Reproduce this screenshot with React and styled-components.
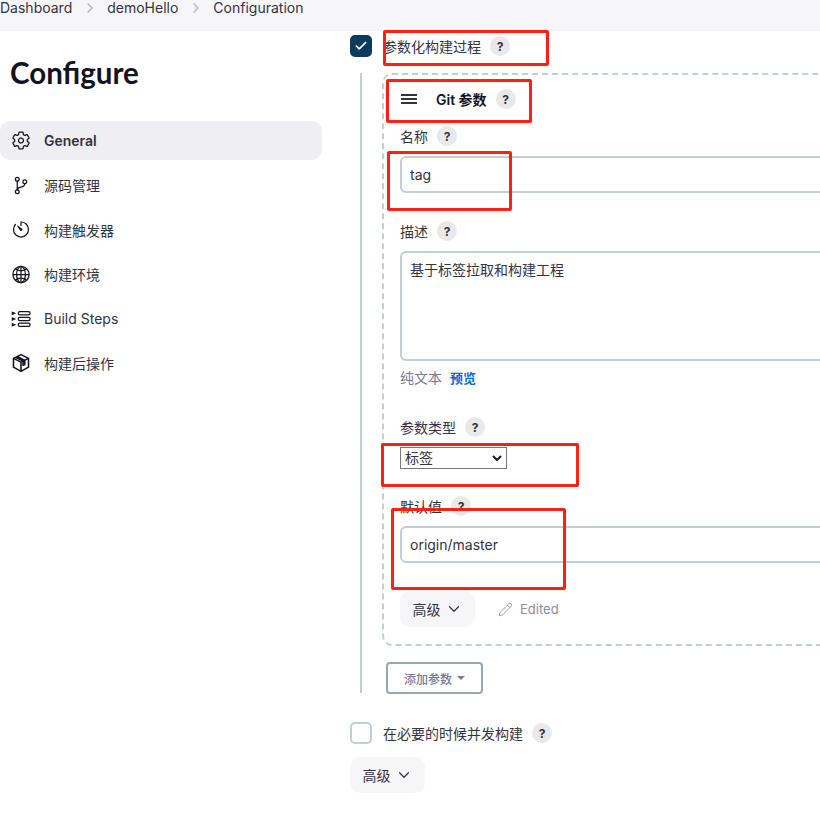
import React from "react";
import styled, { createGlobalStyle } from "styled-components";
import { Check, ChevronDown, Pencil } from "lucide-react";
import {
  IoSettingsOutline,
  IoGitBranchOutline,
  IoTimerOutline,
  IoGlobeOutline,
  IoChevronForwardOutline,
} from "react-icons/io5";

const GlobalStyle = createGlobalStyle`
  html, body {
    margin: 0;
    padding: 0;
    background: #fff;
    overflow: hidden;
    height: 817px;
  }
  body, select, button, textarea, input {
    font-family: Inter, "Noto Sans CJK SC", sans-serif;
  }
`;

const Page = styled.div`
  width: 820px;
  height: 817px;
  overflow: hidden;
  position: relative;
  color: #14141f;
`;

const Breadcrumb = styled.div`
  height: 31px;
  box-sizing: border-box;
  background: #f6f6f9;
  display: flex;
  align-items: flex-start;
  font-size: 14px;
  line-height: 16px;
  color: #33333f;
`;

const Crumb = styled.span`
  white-space: nowrap;
`;

const CrumbSep = styled.span`
  width: 35px;
  height: 16px;
  display: flex;
  align-items: center;
  justify-content: center;
  color: #b0b0b8;
`;

const Layout = styled.div`
  display: flex;
`;

const Sidebar = styled.aside`
  width: 322px;
  flex: none;
`;

const Title = styled.h1`
  margin: 24px 0 30px 10px;
  font-family: Lato, sans-serif;
  font-size: 29.5px;
  line-height: 36px;
  font-weight: 700;
`;

const NavItem = styled.div`
  height: 39px;
  margin-bottom: 5.5px;
  display: flex;
  align-items: center;
  gap: 13px;
  padding-left: 11px;
  border-radius: 10px;
  font-size: 14px;
  color: #33333f;
  background: ${(p) => (p.$active ? "#eeeef3" : "transparent")};
  font-weight: ${(p) => (p.$active ? 600 : 400)};
`;

const NavIcon = styled.span`
  width: 20px;
  height: 20px;
  display: flex;
  align-items: center;
  justify-content: center;
  color: #14141f;
`;

const Main = styled.main`
  margin-left: 28px;
  flex: 1;
  min-width: 0;
`;

const CheckRow = styled.div`
  display: flex;
  align-items: center;
  height: 22px;
  font-size: 14px;
  color: #33333f;
  margin-top: ${(p) => p.$top || 0}px;
`;

const CheckBox = styled.span`
  width: 22px;
  height: 22px;
  box-sizing: border-box;
  border-radius: 5px;
  margin-right: 11px;
  display: flex;
  align-items: center;
  justify-content: center;
  color: #fff;
  background: ${(p) => (p.$checked ? "#0b3c5d" : "#fff")};
  border: 2px solid ${(p) => (p.$checked ? "#0b3c5d" : "#c3ced3")};
`;

const Help = styled.span`
  width: 20px;
  height: 20px;
  flex: none;
  border-radius: 50%;
  background: #e9e9e9;
  color: #33333f;
  font-size: 12px;
  font-weight: 700;
  display: flex;
  align-items: center;
  justify-content: center;
  margin-left: 9px;
`;

const Nested = styled.div`
  margin: 16px 0 0 10px;
  padding-left: 20px;
  border-left: 2px solid #c3ced3;
  height: 620px;
`;

const Chunk = styled.div`
  width: 600px;
  height: 573px;
  box-sizing: border-box;
  border: 2px dashed #c3ced3;
  border-radius: 10px;
  padding: 0 0 0 16px;
`;

const ChunkHead = styled.div`
  display: flex;
  align-items: center;
  height: 22px;
  margin-top: 13px;
  font-size: 14px;
  font-weight: 600;
`;

const Handle = styled.span`
  width: 16px;
  height: 10px;
  margin: 0 19px 0 1px;
  border-top: 2px solid #33333f;
  border-bottom: 2px solid #33333f;
  box-sizing: border-box;
  position: relative;
  &::after {
    content: "";
    position: absolute;
    left: 0;
    right: 0;
    top: 2px;
    height: 2px;
    background: #33333f;
  }
`;

const FieldLabel = styled.div`
  display: flex;
  align-items: center;
  height: 20px;
  font-size: 14px;
  color: #33333f;
  margin-top: ${(p) => p.$top}px;
`;

const TextBox = styled.div`
  width: 500px;
  height: ${(p) => p.$height || 37}px;
  box-sizing: border-box;
  margin-top: ${(p) => p.$top || 10}px;
  border: 2px solid #c3ced3;
  border-radius: 6px;
  padding: ${(p) => (p.$height ? "6px 8px" : "0 8px")};
  display: flex;
  align-items: ${(p) => (p.$height ? "flex-start" : "center")};
  font-size: 14px;
  color: #33333f;
`;

const EditorTabs = styled.div`
  display: flex;
  gap: 8px;
  margin-top: 8px;
  font-size: 14px;
  line-height: 18px;
  color: #7a7a8c;
`;

const PreviewLink = styled.span`
  color: #0b6bcb;
  font-weight: 600;
  font-size: 13px;
`;

const chevron =
  "data:image/svg+xml,%3Csvg xmlns='http://www.w3.org/2000/svg' width='10' height='8' viewBox='0 0 10 8'%3E%3Cpath d='M1 2l4 4 4-4' fill='none' stroke='%23222' stroke-width='2.2'/%3E%3C/svg%3E";

const TypeSelect = styled.select`
  display: block;
  width: 107px;
  height: 22px;
  box-sizing: border-box;
  margin-top: 10px;
  font-size: 14px;
  line-height: 20px;
  padding: 0 0 0 4px;
  appearance: none;
  background: #fff url("${chevron}") no-repeat right 4px center;
  color: #33333f;
  border: 1px solid #767676;
  border-radius: 0;
`;

const AdvancedRow = styled.div`
  display: flex;
  align-items: center;
  margin-top: 28px;
`;

const AdvancedButton = styled.button`
  width: 75px;
  height: 36px;
  border: none;
  border-radius: 10px;
  background: #f6f6f9;
  color: #33333f;
  font-size: 14px;
  display: flex;
  align-items: center;
  justify-content: center;
  gap: 4px;
  padding: 0;
  margin-top: ${(p) => p.$top || 0}px;
`;

const Edited = styled.span`
  display: flex;
  align-items: center;
  gap: 7px;
  margin-left: 23px;
  font-size: 13px;
  color: #8a8a9c;
`;

const AddButton = styled.button`
  width: 97px;
  height: 32px;
  margin-top: 16px;
  box-sizing: border-box;
  background: #fff;
  border: 2px solid #9aa7b0;
  border-radius: 4px;
  color: #7a7a8c;
  font-size: 12px;
  font-weight: 500;
  display: flex;
  align-items: center;
  justify-content: center;
  gap: 5px;
  padding: 0;
  margin-left: 4px;
`;

const Caret = styled.span`
  width: 0;
  height: 0;
  border-left: 4px solid transparent;
  border-right: 4px solid transparent;
  border-top: 4px solid #7a7a8c;
`;

// the red boxes someone drew on top of the screenshot
const Mark = styled.div`
  position: absolute;
  box-sizing: border-box;
  border: 3px solid #ff1f14;
  border-radius: 2px;
  left: ${(p) => p.$x}px;
  top: ${(p) => p.$y}px;
  width: ${(p) => p.$w}px;
  height: ${(p) => p.$h}px;
`;

const StepsIcon = () => (
  <svg width="22" height="20" viewBox="0 0 22 20" fill="none" stroke="currentColor" strokeWidth="1.4">
    <rect x="8" y="2" width="13" height="3.5" rx="1.75" />
    <rect x="8" y="8.2" width="13" height="3.5" rx="1.75" />
    <rect x="8" y="14.5" width="13" height="3.5" rx="1.75" />
    <path d="M1.5 2.7l2.5 1.1-2.5 1.1zM1.5 8.9l2.5 1.1-2.5 1.1zM1.5 15.2l2.5 1.1-2.5 1.1z" />
  </svg>
);

const BoxIcon = () => (
  <svg width="20" height="20" viewBox="0 0 24 24" fill="none" stroke="currentColor" strokeWidth="1.9" strokeLinejoin="round">
    <path d="M12 2l9 4.5V17l-9 5-9-5V6.500z" />
    <path d="M3 6.500l9 4.500 9-4.500M12 11v11" />
    <path d="M7.500 4.200l9 4.600v5l-2 1v-5l-9-4.500" />
  </svg>
);

const nav = [
  { label: "General", icon: <IoSettingsOutline size={21} />, active: true },
  { label: "源码管理", icon: <IoGitBranchOutline size={21} /> },
  { label: "构建触发器", icon: <IoTimerOutline size={21} /> },
  { label: "构建环境", icon: <IoGlobeOutline size={21} /> },
  { label: "Build Steps", icon: <StepsIcon /> },
  { label: "构建后操作", icon: <BoxIcon /> },
];

const marks = [
  { x: 383, y: 30, w: 166, h: 36 },
  { x: 386, y: 79, w: 146, h: 44 },
  { x: 387, y: 151, w: 125, h: 60 },
  { x: 381, y: 443, w: 198, h: 44 },
  { x: 391, y: 508, w: 175, h: 82 },
];

export default function App() {
  return (
    <Page>
      <GlobalStyle />
      <Breadcrumb>
        <Crumb>Dashboard</Crumb>
        <CrumbSep>
          <IoChevronForwardOutline size={14} />
        </CrumbSep>
        <Crumb>demoHello</Crumb>
        <CrumbSep>
          <IoChevronForwardOutline size={14} />
        </CrumbSep>
        <Crumb>Configuration</Crumb>
      </Breadcrumb>
      <Layout>
        <Sidebar>
          <Title>Configure</Title>
          {nav.map((item) => (
            <NavItem key={item.label} $active={item.active}>
              <NavIcon>{item.icon}</NavIcon>
              {item.label}
            </NavItem>
          ))}
        </Sidebar>
        <Main>
          <CheckRow $top={4}>
            <CheckBox $checked>
              <Check size={14} strokeWidth={3} />
            </CheckBox>
            参数化构建过程
            <Help>?</Help>
          </CheckRow>
          <Nested>
            <Chunk>
              <ChunkHead>
                <Handle />
                Git 参数
                <Help>?</Help>
              </ChunkHead>
              <FieldLabel $top={16}>
                名称
                <Help>?</Help>
              </FieldLabel>
              <TextBox>tag</TextBox>
              <FieldLabel $top={28}>
                描述
                <Help>?</Help>
              </FieldLabel>
              <TextBox $height={110}>基于标签拉取和构建工程</TextBox>
              <EditorTabs>
                纯文本
                <PreviewLink>预览</PreviewLink>
              </EditorTabs>
              <FieldLabel $top={30}>
                参数类型
                <Help>?</Help>
              </FieldLabel>
              <TypeSelect defaultValue="tag">
                <option value="tag">标签</option>
              </TypeSelect>
              <FieldLabel $top={27}>
                默认值
                <Help>?</Help>
              </FieldLabel>
              <TextBox>origin/master</TextBox>
              <AdvancedRow>
                <AdvancedButton>
                  高级
                  <ChevronDown size={18} strokeWidth={1.6} />
                </AdvancedButton>
                <Edited>
                  <Pencil size={15} strokeWidth={1.4} />
                  Edited
                </Edited>
              </AdvancedRow>
            </Chunk>
            <AddButton>
              添加参数
              <Caret />
            </AddButton>
          </Nested>
          <CheckRow $top={29}>
            <CheckBox />
            在必要的时候并发构建
            <Help>?</Help>
          </CheckRow>
          <AdvancedButton $top={13}>
            高级
            <ChevronDown size={18} strokeWidth={1.6} />
          </AdvancedButton>
        </Main>
      </Layout>
      {marks.map((m) => (
        <Mark key={m.y} $x={m.x} $y={m.y} $w={m.w} $h={m.h} />
      ))}
    </Page>
  );
}
